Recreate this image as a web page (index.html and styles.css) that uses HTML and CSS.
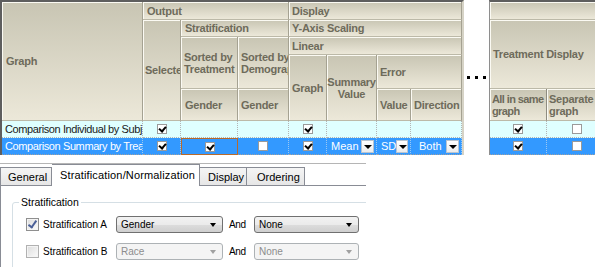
FILE: index.html
```html
<!DOCTYPE html>
<html>
<head>
<meta charset="utf-8">
<link rel="stylesheet" href="styles.css">
</head>
<body>
<div class="top">
  <div class="grid main">
    <div class="h c-graph">Graph</div>
    <div class="h c-output">Output</div>
    <div class="h c-display">Display</div>
    <div class="h c-selected">Selected</div>
    <div class="h c-strat">Stratification</div>
    <div class="h c-yaxis">Y-Axis Scaling</div>
    <div class="h c-sortt">Sorted by<br>Treatment</div>
    <div class="h c-sortd">Sorted by<br>Demographics</div>
    <div class="h c-linear">Linear</div>
    <div class="h c-dgraph">Graph</div>
    <div class="h c-summary">Summary<br>Value</div>
    <div class="h c-error">Error</div>
    <div class="h c-g1">Gender</div>
    <div class="h c-g2">Gender</div>
    <div class="h c-value">Value</div>
    <div class="h c-dir">Direction</div>

    <div class="d r1 name">Comparison Individual by Subject</div>
    <div class="d r1 mid"><span class="cb on"></span></div>
    <div class="d r1"></div>
    <div class="d r1"></div>
    <div class="d r1 mid"><span class="cb on"></span></div>
    <div class="d r1"></div>
    <div class="d r1"></div>
    <div class="d r1"></div>

    <div class="d r2 name">Comparison Summary by Treatment</div>
    <div class="d r2 mid"><span class="cb on"></span></div>
    <div class="d r2 mid focus"><span class="cb on"></span></div>
    <div class="d r2 mid"><span class="cb"></span></div>
    <div class="d r2 mid"><span class="cb on"></span></div>
    <div class="d r2 pick"><span class="val">Mean</span><span class="btn"></span></div>
    <div class="d r2 pick"><span class="val">SD</span><span class="btn"></span></div>
    <div class="d r2 pick wide"><span class="val">Both</span><span class="btn"></span></div>
  </div>

  <div class="dots"><i></i><i></i><i></i></div>

  <div class="grid side">
    <div class="h s-blank"></div>
    <div class="h s-treat">Treatment Display</div>
    <div class="h s-all">All in same<br>graph</div>
    <div class="h s-sep">Separate<br>graph</div>

    <div class="d r1 mid"><span class="cb on"></span></div>
    <div class="d r1 mid"><span class="cb"></span></div>
    <div class="d r2 mid"><span class="cb on"></span></div>
    <div class="d r2 mid"><span class="cb"></span></div>
  </div>
</div>

<div class="dialog">
  <div class="tabs">
    <div class="tab first">General</div>
    <div class="tab sel">Stratification/Normalization</div>
    <div class="tab">Display</div>
    <div class="tab last">Ordering</div>
  </div>
  <div class="panel">
    <div class="group">
      <div class="legend">Stratification</div>
      <div class="row">
        <span class="wcb checked"></span>
        <span class="lbl">Stratification A</span>
        <span class="combo">Gender</span>
        <span class="and">And</span>
        <span class="combo b">None</span>
      </div>
      <div class="row">
        <span class="wcb off"></span>
        <span class="lbl">Stratification B</span>
        <span class="combo dis">Race</span>
        <span class="and">And</span>
        <span class="combo b dis">None</span>
      </div>
    </div>
  </div>
</div>
</body>
</html>
```

FILE: styles.css
```css
* { box-sizing: border-box; }
html, body { margin: 0; padding: 0; background: #ffffff; }
body {
  width: 595px;
  height: 267px;
  overflow: hidden;
  font-family: "Liberation Sans", Arial, sans-serif;
  font-size: 11px;
}

.top {
  display: flex;
  align-items: flex-start;
  height: 163px;
}

.grid {
  display: grid;
  border-top: 2px solid #5e5e5e;
  overflow: hidden;
  flex: none;
}
.main {
  border-left: 2px solid #5e5e5e;
  border-right: 2px solid #d6d3c6;
  grid-template-columns: 141px 38px 57px 51px 38px 50px 34px 51px;
  grid-template-rows: 18px 17px 18px 34px 32px 17px 17px;
  width: 464px;
}
.side {
  border-left: 1px solid #8e8e8e;
  grid-template-columns: 57px 60px;
  grid-template-rows: 18px 69px 32px 17px 17px;
  width: 106px;
}

.h {
  display: flex;
  align-items: center;
  padding-left: 4px;
  background: linear-gradient(#c8c5b3, #ece8d9);
  border-right: 1px solid #a5a292;
  border-bottom: 1px solid #bcb9a8;
  box-shadow: inset 1px 1px 0 #fbfaf3;
  color: #6e6b5b;
  font-weight: bold;
  font-size: 11px;
  line-height: 12px;
  letter-spacing: -0.25px;
  white-space: nowrap;
  overflow: hidden;
}

.c-graph { grid-column: 1; grid-row: 1 / 6; padding-left: 4px; }
.c-output { grid-column: 2 / 5; grid-row: 1; }
.c-display { grid-column: 5 / 9; grid-row: 1; padding-left: 3px; }
.c-selected { grid-column: 2; grid-row: 2 / 6; padding-left: 2px; }
.c-strat { grid-column: 3 / 5; grid-row: 2; }
.c-yaxis { grid-column: 5 / 9; grid-row: 2; padding-left: 3px; }
.c-sortt { grid-column: 3; grid-row: 3 / 5; padding-left: 3px; }
.c-sortd { grid-column: 4; grid-row: 3 / 5; padding-left: 3px; }
.c-linear { grid-column: 5 / 9; grid-row: 3; padding-left: 3px; }
.c-dgraph { grid-column: 5; grid-row: 4 / 6; padding-left: 3px; }
.c-summary { grid-column: 6; grid-row: 4 / 6; justify-content: center; text-align: center; padding-left: 0; }
.c-error { grid-column: 7 / 9; grid-row: 4; padding-left: 3px; }
.c-g1 { grid-column: 3; grid-row: 5; }
.c-g2 { grid-column: 4; grid-row: 5; padding-left: 3px; }
.c-value { grid-column: 7; grid-row: 5; padding-left: 3px; }
.c-dir { grid-column: 8; grid-row: 5; padding-left: 3px; }

.s-blank { grid-column: 1 / 3; grid-row: 1; }
.s-treat { grid-column: 1 / 3; grid-row: 2; padding-left: 3px; }
.s-all { grid-column: 1; grid-row: 3; padding-left: 2px; border-right-color: #8e8c80; letter-spacing: -0.6px; }
.s-sep { grid-column: 2; grid-row: 3; padding-left: 2px; }

.d {
  display: flex;
  align-items: center;
  white-space: nowrap;
  overflow: hidden;
  letter-spacing: -0.4px;
}
.r1 {
  background: #dfffff;
  color: #1a1a1a;
  border-right: 1px dotted #b4b4b4;
  border-bottom: 1px dotted #b4b4b4;
}
.r2 {
  background: #3399ff;
  color: #ffffff;
  border-right: 1px dotted #9cc8f2;
  border-bottom: 1px dotted #a0a0a0;
}
.name { padding-left: 3px; }
.mid { justify-content: center; }
.focus { border: 1px solid #b86a2c; }

.cb {
  display: block;
  width: 10px;
  height: 10px;
  background: #ffffff;
  border: 1px solid #9a9a9a;
  position: relative;
}
.cb.on::after {
  content: "";
  position: absolute;
  left: 2px;
  top: 0px;
  width: 3px;
  height: 5px;
  border-right: 2px solid #000;
  border-bottom: 2px solid #000;
  transform: rotate(40deg);
}

.pick { padding-left: 4px; letter-spacing: 0; }
.pick .val { flex: 1; }
.pick.wide { padding-left: 8px; }
.btn {
  display: block;
  width: 13px;
  height: 13px;
  margin-right: 2px;
  background: linear-gradient(#ffffff, #ececec);
  border: 1px solid #b9c4d0;
  position: relative;
}
.btn::after {
  content: "";
  position: absolute;
  left: 2px;
  top: 4px;
  border-left: 4px solid transparent;
  border-right: 4px solid transparent;
  border-top: 4px solid #000;
}

.dots {
  flex: none;
  width: 25px;
  height: 155px;
  display: flex;
  align-items: center;
  gap: 5px;
  padding-left: 3px;
}
.dots i {
  display: block;
  width: 3px;
  height: 3px;
  background: #000;
}

/* dialog */
.dialog {
  width: 366px;
  height: 104px;
  background: #ffffff;
  border-top: 1px solid #b5b5b5;
  overflow: hidden;
  font-family: "Liberation Sans", Arial, sans-serif;
  font-size: 11px;
  color: #000;
  display: flex;
  flex-direction: column;
}
.tabs {
  display: flex;
  align-items: flex-end;
  height: 21px;
  flex: none;
  position: relative;
  z-index: 1;
}
.tab {
  flex: none;
  height: 18px;
  width: 47px;
  padding: 0 0 0 8px;
  display: flex;
  align-items: center;
  border: 1px solid #898c95;
  border-bottom: none;
  border-left: none;
  background: linear-gradient(#f5f5f5, #e6e6e6);
  white-space: nowrap;
}
.tab.first { border-left: 1px solid #898c95; width: 52px; padding-left: 7px; }
.tab.sel {
  height: 22px;
  margin-bottom: -1px;
  background: #ffffff;
  width: 148px;
  padding-left: 8px;
  align-items: flex-start;
  padding-top: 4px;
  letter-spacing: 0.15px;
}
.tab.last { width: 58px; padding-left: 10px; }
.panel {
  flex: 1;
  background: #ffffff;
  border-top: 1px solid #898c95;
  border-left: 1px solid #898c95;
  padding: 16px 0 0 11px;
}
.group {
  position: relative;
  width: 420px;
  height: 80px;
  border: 1px solid #d5dfe5;
  border-radius: 3px;
  padding: 13px 0 0 13px;
  font-size: 10px;
}
.legend {
  position: absolute;
  left: 6px;
  top: -8px;
  padding: 0 2px;
  background: #ffffff;
  line-height: 14px;
  font-size: 10.5px;
}
.row {
  display: flex;
  align-items: center;
  height: 17px;
  margin-bottom: 10px;
}
.wcb {
  flex: none;
  width: 13px;
  height: 13px;
  border: 1px solid #8f8f8f;
  background: linear-gradient(135deg, #dcdcdc, #fbfbfb);
  box-shadow: inset 0 0 0 1px #f4f4f4;
  position: relative;
  margin-right: 4px;
}
.wcb.checked::after {
  content: "";
  position: absolute;
  left: 3px;
  top: 0px;
  width: 3px;
  height: 7px;
  border-right: 2px solid #4a5f97;
  border-bottom: 2px solid #4a5f97;
  transform: rotate(35deg);
}
.wcb.off { border-color: #b1b1b1; }
.lbl { flex: none; width: 73px; }
.combo {
  flex: none;
  width: 107px;
  height: 17px;
  border: 1px solid #707070;
  border-radius: 3px;
  background: linear-gradient(#f2f2f2, #ebebeb 50%, #dddddd 51%, #cfcfcf);
  padding-left: 4px;
  display: flex;
  align-items: center;
  position: relative;
}
.combo::after {
  content: "";
  position: absolute;
  right: 6px;
  top: 6px;
  border-left: 3px solid transparent;
  border-right: 3px solid transparent;
  border-top: 4px solid #000;
}
.combo.b { width: 105px; }
.combo.dis {
  background: #f4f4f4;
  border-color: #adb2b5;
  color: #8d8d8d;
}
.combo.dis::after { border-top-color: #a0a0a0; }
.and { flex: none; width: 31px; padding-left: 6px; letter-spacing: -0.4px; }
```
